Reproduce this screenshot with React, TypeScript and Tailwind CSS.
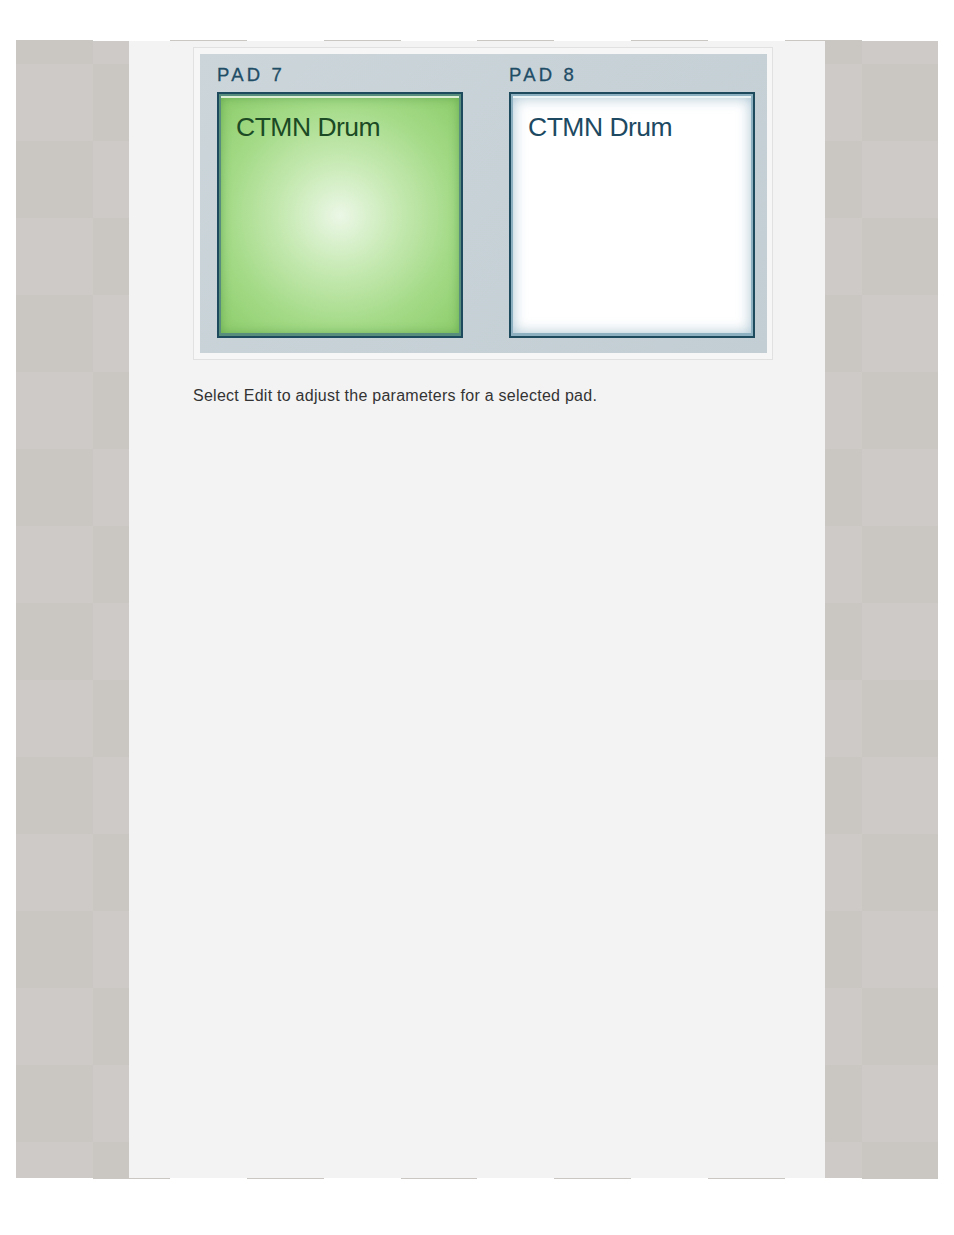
import React from 'react';

type PadProps = {
  label: string;
  name: string;
  selected?: boolean;
};

function Pad({ label, name, selected }: PadProps) {
  return (
    <div className="flex flex-col w-[246px]">
      <div className="h-[18px] leading-none text-[18.5px] tracking-[3.2px] text-[#1f4d66] [-webkit-text-stroke:0.3px_#1f4d66] mb-[8px]">
        {label}
      </div>
      {selected ? (
        <div className="w-[246px] h-[246px] border-2 border-[#1d4a5c] bg-[#568d7d] px-[2px] pt-[2px] pb-[3px] flex">
          <div className="flex-1 border-t-2 border-[#dcefd4] bg-[radial-gradient(ellipse_at_center,#ebf7e6_0%,#c8eab5_32%,#a3da86_68%,#8dcc6b_100%)] shadow-[inset_0_0_10px_rgba(70,140,60,0.5)] pl-[15px] pt-[16px]">
            <div className="text-[26.5px] leading-none tracking-[-0.5px] text-[#1b4a24]">{name}</div>
          </div>
        </div>
      ) : (
        <div className="w-[246px] h-[246px] border-2 border-[#1d4a5c] bg-[#8db1c1] px-[2px] pt-[2px] pb-[3px] flex">
          <div className="flex-1 border-t-2 border-[#eaf3f6] bg-white shadow-[inset_0_0_14px_rgba(110,155,178,0.6)] pl-[15px] pt-[16px]">
            <div className="text-[26.5px] leading-none tracking-[-0.5px] text-[#1d4a62]">{name}</div>
          </div>
        </div>
      )}
    </div>
  );
}

export default function App() {
  return (
    <div className="w-[954px] h-[1235px] bg-white pt-[40px] font-['Liberation_Sans',Arial,sans-serif]">
      <div className="ml-[16px] w-[922px] h-[1139px] flex flex-col">
        {/* 1px edge where the darker tiles poke out */}
        <div className="h-[1px] bg-[repeating-linear-gradient(90deg,#cac6c2_0_76.9px,transparent_76.9px_153.8px)]" />
        <div className="flex-1 flex bg-[repeating-conic-gradient(#cac6c2_0_25%,#cecac7_0_50%)] bg-[length:153.8px_154px] bg-[position:0_23px]">
          <div className="w-[113px]" />
          <div className="w-[696px] bg-[#f3f3f3] pt-[6px] pl-[64px]">
            <div className="w-[580px] border border-[#e1e1e1] bg-[#f6f6f6] p-[6px] pr-[5px]">
              <div className="h-[299px] bg-[linear-gradient(135deg,#cbd5da,#c3ced4)] pt-[12px] pl-[17px] flex gap-[46px]">
                <Pad label="PAD 7" name="CTMN Drum" selected />
                <Pad label="PAD 8" name="CTMN Drum" />
              </div>
            </div>
            <p className="mt-[28px] text-[16px] leading-none tracking-[0.26px] text-[#333333]">
              Select Edit to adjust the parameters for a selected pad.
            </p>
          </div>
          <div className="w-[113px]" />
        </div>
        <div className="h-[1px] bg-[repeating-linear-gradient(90deg,transparent_0_76.9px,#cac6c2_76.9px_153.8px)]" />
      </div>
    </div>
  );
}
